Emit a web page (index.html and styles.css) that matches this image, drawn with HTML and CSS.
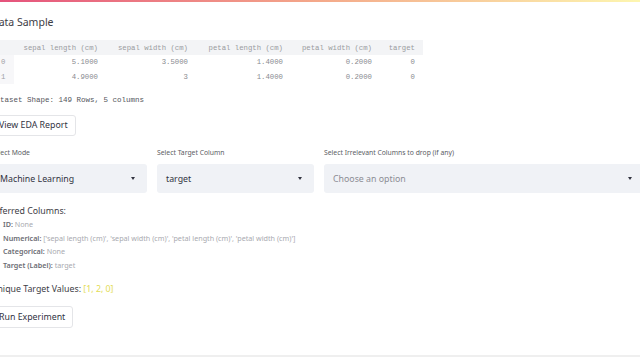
FILE: index.html
```html
<!DOCTYPE html>
<html lang="en">
	<head>
		<meta charset="UTF-8" />
		<title>ML Experiment</title>
		<link rel="stylesheet" href="styles.css">
	</head>
	<body>
		<div class="decoration"></div>
		<main class="page">
			<h3 class="subheader">Data Sample</h3>
			<table class="frame">
				<colgroup>
					<col class="c-idx" /><col class="c1" /><col class="c2" /><col class="c3" /><col class="c4" /><col class="c5" />
				</colgroup>
				<thead>
					<tr>
						<th></th>
						<th>sepal length (cm)</th>
						<th>sepal width (cm)</th>
						<th>petal length (cm)</th>
						<th>petal width (cm)</th>
						<th>target</th>
					</tr>
				</thead>
				<tbody>
					<tr>
						<th>0</th><td>5.1000</td><td>3.5000</td><td>1.4000</td><td>0.2000</td><td>0</td>
					</tr>
					<tr>
						<th>1</th><td>4.9000</td><td>3</td><td>1.4000</td><td>0.2000</td><td>0</td>
					</tr>
				</tbody>
			</table>
			<p class="mono">Dataset Shape: 149 Rows, 5 columns</p>
			<button class="btn btn-eda">View EDA Report</button>

			<div class="selects">
				<div class="field">
					<label>Select Mode</label>
					<div class="select">
						<span>Machine Learning</span>
						<svg class="caret" width="4" height="3" viewBox="0 0 4 3"><path d="M0 0h4L2 3z" fill="#31333f"/></svg>
					</div>
				</div>
				<div class="field">
					<label>Select Target Column</label>
					<div class="select">
						<span>target</span>
						<svg class="caret" width="4" height="3" viewBox="0 0 4 3"><path d="M0 0h4L2 3z" fill="#31333f"/></svg>
					</div>
				</div>
				<div class="field">
					<label>Select Irrelevant Columns to drop (if any)</label>
					<div class="select">
						<span class="placeholder">Choose an option</span>
						<svg class="caret" width="4" height="3" viewBox="0 0 4 3"><path d="M0 0h4L2 3z" fill="#31333f"/></svg>
					</div>
				</div>
			</div>

			<p class="heading">Inferred Columns:</p>
			<ul class="inferred">
				<li><b>ID:</b> None</li>
				<li><b>Numerical:</b> ['sepal length (cm)', 'sepal width (cm)', 'petal length (cm)', 'petal width (cm)']</li>
				<li><b>Categorical:</b> None</li>
				<li><b>Target (Label):</b> target</li>
			</ul>

			<p class="heading unique">Unique Target Values: <span class="values">[1, 2, 0]</span></p>
			<button class="btn btn-run">Run Experiment</button>
		</main>
		<div class="footer-line"></div>
	</body>
</html>
```

FILE: styles.css
```css
html,
body {
	margin: 0;
	padding: 0;
	height: 360px;
	overflow: hidden;
	background: #fff;
	font-family: "Noto Sans", "Open Sans", sans-serif;
	color: #31333f;
}
.decoration {
	height: 2px;
	background: linear-gradient(90deg, #e5537c, #f4a98a 50%, #fdf6b0);
}
.page {
	margin-left: -9px;
	width: 653px;
	padding-top: 13px;
}
.subheader {
	margin: 0;
	font-size: 10.5px;
	line-height: 14px;
	font-weight: 400;
	color: #3d3d45;
}
.frame {
	margin-top: 11px;
	border-collapse: collapse;
	table-layout: fixed;
	width: 432px;
	font-family: "Liberation Mono", "DejaVu Sans Mono", monospace;
	font-size: 7.3px;
	color: #8a8b90;
}
.c-idx { width: 23px; }
.c1 { width: 92px; }
.c2 { width: 90px; }
.c3 { width: 95px; }
.c4 { width: 89px; }
.c5 { width: 43px; }
.frame th,
.frame td {
	padding: 0 8px 0 0;
	text-align: right;
	font-weight: 400;
	white-space: nowrap;
}
.frame thead th {
	height: 15px;
	background: #f3f4f6;
	color: #9a9ba0;
}
.frame tbody tr {
	height: 14.5px;
}
.frame tbody th {
	background: #f7f7f9;
	text-align: left;
	padding-left: 10px;
	color: #a0a1a6;
}
.mono {
	margin: 10px 0 0;
	font-family: "Liberation Mono", "DejaVu Sans Mono", monospace;
	font-size: 7.5px;
	line-height: 12px;
	color: #55565c;
}
.btn {
	display: block;
	font-family: inherit;
	font-size: 8.8px;
	line-height: 13px;
	color: #31333f;
	background: #fff;
	border: 1px solid #e4e5e8;
	border-radius: 3px;
	padding: 3px 7px;
}
.btn-eda {
	margin-top: 9px;
	height: 21px;
}
.selects {
	margin-top: 12px;
	display: grid;
	grid-template-columns: 156px 157px 1fr;
	gap: 10px;
}
.field label {
	display: block;
	font-size: 6.8px;
	line-height: 10px;
	color: #5b5c63;
	margin-bottom: 6px;
}
.select {
	height: 29px;
	background: #f0f2f6;
	border-radius: 3px;
	display: flex;
	align-items: center;
	justify-content: space-between;
	padding: 0 12px 0 9px;
	font-size: 8.8px;
	color: #31333f;
}
.select .placeholder {
	color: #8c8d94;
}
.heading {
	margin: 11px 0 0;
	font-size: 8.8px;
	line-height: 14px;
	color: #3d3d45;
}
.inferred {
	list-style: none;
	margin: 0;
	padding: 0 0 0 12px;
	font-size: 7.2px;
	line-height: 13.5px;
	color: #a9aab0;
}
.inferred b {
	font-weight: 600;
	color: #6c6d74;
}
.unique {
	margin-top: 10px;
}
.values {
	color: #e2dc55;
}
.btn-run {
	margin-top: 10px;
	height: 22px;
}
.footer-line {
	margin-top: 27px;
	height: 2px;
	background: #efefef;
}
```
